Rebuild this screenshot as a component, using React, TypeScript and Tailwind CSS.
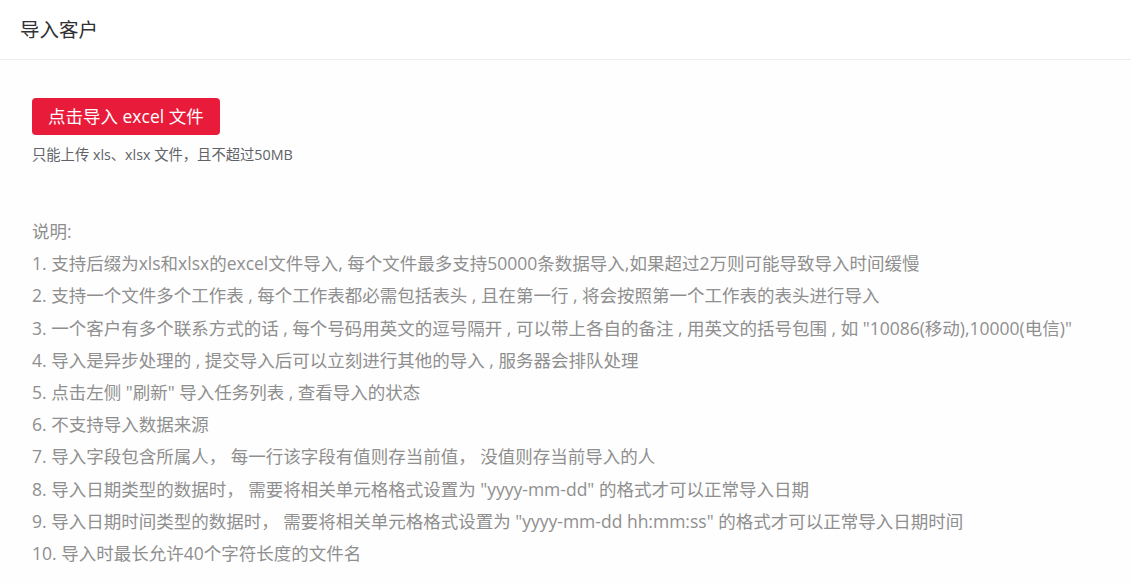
export default function App() {
    const notes = [
        "1. 支持后缀为xls和xlsx的excel文件导入, 每个文件最多支持50000条数据导入,如果超过2万则可能导致导入时间缓慢",
        "2. 支持一个文件多个工作表 , 每个工作表都必需包括表头 , 且在第一行 , 将会按照第一个工作表的表头进行导入",
        "3. 一个客户有多个联系方式的话 , 每个号码用英文的逗号隔开 , 可以带上各自的备注 , 用英文的括号包围 , 如 \"10086(移动),10000(电信)\"",
        "4. 导入是异步处理的 , 提交导入后可以立刻进行其他的导入 , 服务器会排队处理",
        "5. 点击左侧 \"刷新\" 导入任务列表 , 查看导入的状态",
        "6. 不支持导入数据来源",
        "7. 导入字段包含所属人， 每一行该字段有值则存当前值， 没值则存当前导入的人",
        "8. 导入日期类型的数据时， 需要将相关单元格格式设置为 \"yyyy-mm-dd\" 的格式才可以正常导入日期",
        "9. 导入日期时间类型的数据时， 需要将相关单元格格式设置为 \"yyyy-mm-dd hh:mm:ss\" 的格式才可以正常导入日期时间",
        "10. 导入时最长允许40个字符长度的文件名",
    ];

    return (
        <div className="min-h-[583px] bg-[#fefefe] font-['Open_Sans','Noto_Sans_CJK_SC',sans-serif]">
            {/* header */}
            <div className="h-[60px] border-b border-[#ebedf0] bg-white flex items-center px-5">
                <h1 className="text-[19.5px] text-[#303133] font-normal">导入客户</h1>
            </div>

            <div className="pl-8 pt-[38px]">
                <button className="h-[37px] px-[16px] rounded bg-[#e81b3a] text-white text-[17.5px] leading-none">
                    点击导入 excel 文件
                </button>
                <p className="mt-[10px] text-[14.3px] leading-5 text-[#606266]">只能上传 xls、xlsx 文件，且不超过50MB</p>

                {/* instructions */}
                <div className="mt-[50px] text-[17.5px] leading-[32.2px] text-[#8f8f8f]">
                    <p>说明:</p>
                    {notes.map((n) => (
                        <p key={n}>{n}</p>
                    ))}
                </div>
            </div>
        </div>
    );
}
